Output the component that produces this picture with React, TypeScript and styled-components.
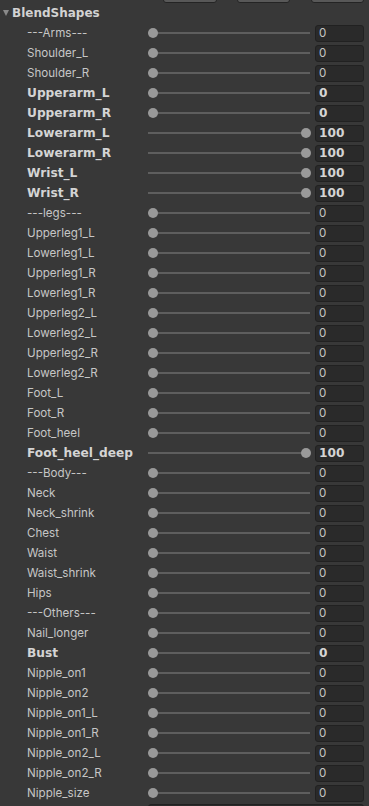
import React from 'react';
import styled, { createGlobalStyle } from 'styled-components';

const GlobalStyle = createGlobalStyle`
  html, body {
    margin: 0;
    padding: 0;
    background: #383838;
  }
  body {
    font-family: Inter, "Noto Sans", sans-serif;
    font-size: 12px;
    color: #c4c4c4;
  }
`;

const regularFont = 'Inter, "Noto Sans", sans-serif';
const boldFont = '"DejaVu Sans", "Liberation Sans", sans-serif';

const Panel = styled.div`
  width: 369px;
  height: 806px;
  overflow: hidden;
  background: #383838;
`;

const ToolStrip = styled.div`
  height: 3px;
  display: flex;
  align-items: flex-end;
  overflow: hidden;
`;

const ToolButton = styled.div<{ $left: number; $width: number }>`
  flex: none;
  margin-left: ${({ $left }) => $left}px;
  width: ${({ $width }) => $width}px;
  height: 20px;
  box-sizing: border-box;
  background: #585858;
  border: 1px solid #242424;
  border-radius: 3px;
`;

const Header = styled.div`
  height: 20px;
  display: flex;
  align-items: center;
  padding-left: 3px;
  font-family: ${boldFont};
  font-weight: bold;
  font-size: 12px;
  color: #d2d2d2;
`;

const Arrow = styled.span`
  width: 0;
  height: 0;
  border-left: 3.5px solid transparent;
  border-right: 3.5px solid transparent;
  border-top: 6px solid #8a8a8a;
  margin-right: 3px;
`;

const List = styled.div`
  display: flex;
  flex-direction: column;
`;

const Row = styled.div`
  height: 20px;
  display: flex;
  align-items: center;
`;

const Label = styled.div<{ $bold: boolean }>`
  flex: none;
  width: 121px;
  padding-left: 27px;
  white-space: nowrap;
  font-family: ${({ $bold }) => ($bold ? boldFont : regularFont)};
  font-weight: ${({ $bold }) => ($bold ? 'bold' : 'normal')};
  font-size: ${({ $bold }) => ($bold ? '12.2px' : '11.6px')};
  color: ${({ $bold }) => ($bold ? '#d4d4d4' : '#c6c6c6')};
`;

const Slider = styled.div`
  flex: none;
  position: relative;
  width: 162px;
  height: 20px;

  &::before {
    content: '';
    position: absolute;
    left: 0;
    right: 0;
    top: 9px;
    height: 2px;
    background: #5e5e5e;
  }
`;

const Thumb = styled.div`
  position: absolute;
  top: 5px;
  width: 10px;
  height: 10px;
  border-radius: 50%;
  background: #999999;
`;

const ValueBox = styled.div<{ $bold: boolean }>`
  flex: none;
  margin-left: 5px;
  width: 49px;
  height: 17px;
  box-sizing: border-box;
  background: #2a2a2a;
  border: 1px solid #212121;
  border-radius: 3px;
  padding-left: 3px;
  display: flex;
  align-items: center;
  font-family: ${({ $bold }) => ($bold ? boldFont : regularFont)};
  font-weight: ${({ $bold }) => ($bold ? 'bold' : 'normal')};
  font-size: ${({ $bold }) => ($bold ? '12.2px' : '11.6px')};
  color: ${({ $bold }) => ($bold ? '#d4d4d4' : '#c6c6c6')};
`;

const NextField = styled.div`
  margin: 1px 5px 0 148px;
  height: 17px;
  box-sizing: border-box;
  background: #2a2a2a;
  border: 1px solid #212121;
  border-radius: 3px;
`;

type Shape = { name: string; value: number; bold?: boolean };

const shapes: Shape[] = [
  { name: '---Arms---', value: 0 },
  { name: 'Shoulder_L', value: 0 },
  { name: 'Shoulder_R', value: 0 },
  { name: 'Upperarm_L', value: 0, bold: true },
  { name: 'Upperarm_R', value: 0, bold: true },
  { name: 'Lowerarm_L', value: 100, bold: true },
  { name: 'Lowerarm_R', value: 100, bold: true },
  { name: 'Wrist_L', value: 100, bold: true },
  { name: 'Wrist_R', value: 100, bold: true },
  { name: '---legs---', value: 0 },
  { name: 'Upperleg1_L', value: 0 },
  { name: 'Lowerleg1_L', value: 0 },
  { name: 'Upperleg1_R', value: 0 },
  { name: 'Lowerleg1_R', value: 0 },
  { name: 'Upperleg2_L', value: 0 },
  { name: 'Lowerleg2_L', value: 0 },
  { name: 'Upperleg2_R', value: 0 },
  { name: 'Lowerleg2_R', value: 0 },
  { name: 'Foot_L', value: 0 },
  { name: 'Foot_R', value: 0 },
  { name: 'Foot_heel', value: 0 },
  { name: 'Foot_heel_deep', value: 100, bold: true },
  { name: '---Body---', value: 0 },
  { name: 'Neck', value: 0 },
  { name: 'Neck_shrink', value: 0 },
  { name: 'Chest', value: 0 },
  { name: 'Waist', value: 0 },
  { name: 'Waist_shrink', value: 0 },
  { name: 'Hips', value: 0 },
  { name: '---Others---', value: 0 },
  { name: 'Nail_longer', value: 0 },
  { name: 'Bust', value: 0, bold: true },
  { name: 'Nipple_on1', value: 0 },
  { name: 'Nipple_on2', value: 0 },
  { name: 'Nipple_on1_L', value: 0 },
  { name: 'Nipple_on1_R', value: 0 },
  { name: 'Nipple_on2_L', value: 0 },
  { name: 'Nipple_on2_R', value: 0 },
  { name: 'Nipple_size', value: 0 },
];

function BlendShapeRow({ name, value, bold = false }: Shape) {
  // thumb travels 153px along the track
  const thumbLeft = (value / 100) * 153;

  return (
    <Row>
      <Label $bold={bold}>{name}</Label>
      <Slider>
        <Thumb style={{ left: thumbLeft }} />
      </Slider>
      <ValueBox $bold={bold}>{value}</ValueBox>
    </Row>
  );
}

export default function App() {
  return (
    <Panel>
      <GlobalStyle />
      <ToolStrip>
        <ToolButton $left={163} $width={54} />
        <ToolButton $left={20} $width={53} />
        <ToolButton $left={21} $width={53} />
      </ToolStrip>
      <Header>
        <Arrow />
        BlendShapes
      </Header>
      <List>
        {shapes.map((shape) => (
          <BlendShapeRow key={shape.name} {...shape} />
        ))}
      </List>
      <NextField />
    </Panel>
  );
}
